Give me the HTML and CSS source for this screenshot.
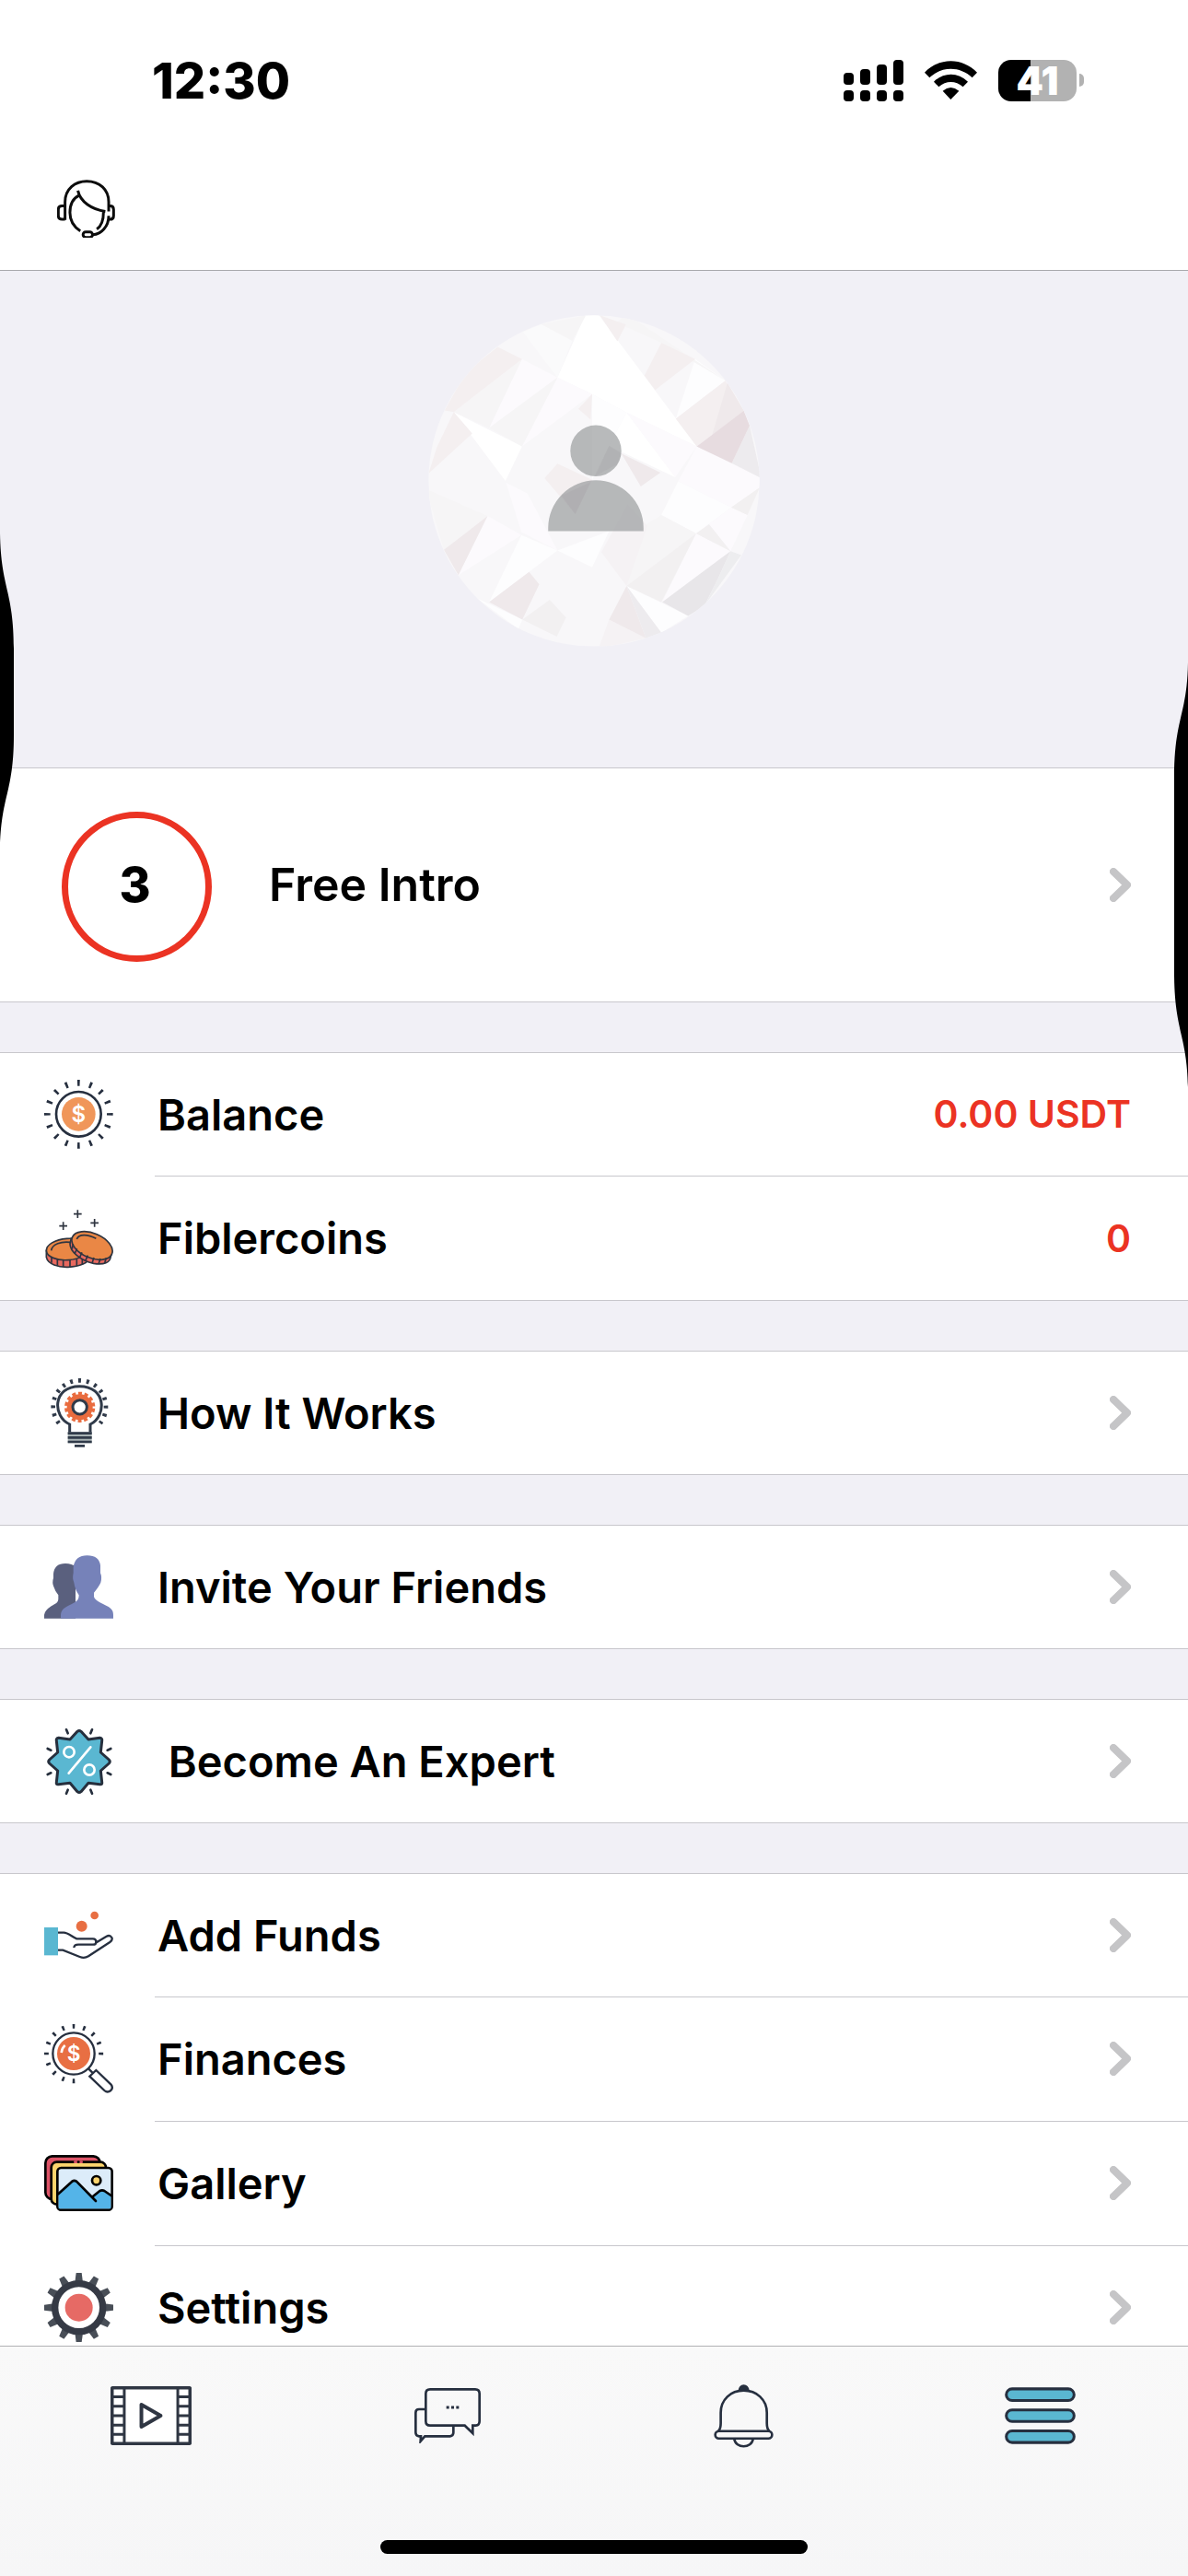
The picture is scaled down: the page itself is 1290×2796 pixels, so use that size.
FILE: index.html
```html
<!DOCTYPE html>
<html lang="en">
<head>
<meta charset="utf-8">
<meta name="viewport" content="width=device-width, initial-scale=1">
<title>Menu</title>
<link rel="stylesheet" href="styles.css">
</head>
<body>
<svg class="defs" aria-hidden="true">
  <symbol id="chevron" viewBox="0 0 23 37"><path d="M4 4 19 18.500 4 33" fill="none" stroke="#c5c5c7" stroke-width="8" stroke-linecap="round" stroke-linejoin="round"/></symbol>
</svg>
<div class="app">
  <header class="header">
    <div class="status">
      <time class="clock">12:30</time>
      <div class="indicators">
        <svg width="65" height="45" viewBox="0 0 65 45" aria-label="Signal">
          <rect x="0" y="14" width="11" height="13" rx="4"/><rect x="18" y="10" width="11" height="17" rx="4"/><rect x="36" y="5" width="11" height="22" rx="4"/><rect x="54" y="0" width="11" height="27" rx="4"/>
          <rect x="0" y="33" width="11" height="12" rx="4"/><rect x="18" y="33" width="11" height="12" rx="4"/><rect x="36" y="33" width="11" height="12" rx="4"/><rect x="54" y="33" width="11" height="12" rx="4"/>
        </svg>
        <svg class="wifi" width="57" height="45" viewBox="312 72 171 135" aria-label="Wi-Fi">
          <path d="M312 113C360 63 435 63 483 113L467 130C427 92 368 92 328 130Z"/>
          <path d="M342 143C374 111 421 111 453 143L437 160C413 139 382 139 358 160Z"/>
          <path d="M371 173Q397 151 424 173L397 201Z"/>
        </svg>
        <div class="battery"><span class="battery-level">41</span></div>
      </div>
    </div>
    <nav class="topbar">
      <button class="support" type="button" aria-label="Support">
        <svg width="63" height="63" viewBox="36 42 190 190" fill="none" stroke="#0c0c0c" stroke-width="9">
          <path d="M62 174V115C62 72 95 47 133 47C175 47 205 75 205 115V146"/>
          <path d="M62 128H52Q40 128 40 140V160Q40 172 52 172H62M205 128H209Q221 128 221 140V160Q221 172 209 172H203"/>
          <path d="M205 160C205 195 180 222 152 222"/><rect x="121" y="213" width="31" height="18" rx="9"/>
          <path d="M112 210C88 195 78 175 78 150C78 122 90 102 109 93M104 78C112 115 150 140 194 146M188 146C188 175 180 195 166 204"/>
        </svg>
      </button>
    </nav>
  </header>

  <main class="content">
    <div class="profile">
      <svg class="avatar" width="360" height="360" viewBox="77 66 1078 1076" role="img" aria-label="Profile picture">
        <clipPath id="round"><circle cx="616" cy="604" r="538"/></clipPath>
        <g clip-path="url(#round)">
          <rect x="77" y="66" width="1078" height="1076" fill="#f8f7f9"/>
          <g fill="#fff">
            <path d="M590 60H628L950 492 722 382 610 322 497 268ZM722 382 880 592 665 490ZM160 380 382 492 328 604Z"/>
          </g>
          <g fill="#fdfdfe">
            <path d="M945 208 1043 278 882 402ZM890 605 1062 690 948 775 835 715ZM722 945 922 1043 835 1097ZM235 985 383 1055 370 1085ZM497 830 665 767 610 885ZM380 780 497 830 275 998ZM610 322 722 382 665 490 610 600Z"/>
          </g>
          <g fill="#fcfafd">
            <path d="M382 208 497 268 275 432ZM497 268 610 322 382 492ZM950 492 1160 595V622L1062 690 890 605ZM722 382 950 492 880 592ZM948 775 1060 832 838 998ZM1062 690 1115 715 1060 832 990 745ZM270 718 380 780 175 910ZM330 610 400 645 497 830 380 770Z"/>
          </g>
          <path fill="#fafafb" d="M385 120 445 95 545 148 497 268Z"/>
          <g fill="#f6f5f6">
            <path d="M382 208 275 432 160 380ZM382 492 497 268 275 432ZM445 95 590 66 545 148ZM270 718 128 828 70 630ZM835 715 948 775 722 945 640 835ZM720 60 1043 278 835 155 690 90Z"/>
          </g>
          <path fill="#f5f2f4" d="M640 835 725 680 790 750 722 945ZM665 1055 785 1115 630 1150Z"/>
          <g fill="#f4eff0">
            <path d="M635 66 720 96 692 150ZM835 155 945 208 815 308 780 262ZM303 168 382 208 160 380 130 375 200 250ZM160 380 220 450 78 580 105 495ZM1043 278 1103 376 950 492 882 402ZM610 322 605 405 565 370ZM497 548 610 600 555 712 455 595Z"/>
          </g>
          <path fill="#efe9eb" d="M1050 285 1103 376 1000 455ZM705 515 832 577 768 622ZM270 718 175 910 128 828ZM275 998 405 900 438 940 383 1055ZM722 945 665 1055 785 1115Z"/>
          <path fill="#f2f0f1" d="M383 1055 472 990 525 1048 495 1110ZM722 945 948 775 835 998ZM1062 690 1155 625 1115 715ZM948 775 990 745 1060 832Z"/>
          <path fill="#edebee" d="M722 945 835 1097 785 1115ZM1122 424 1160 595 1064 546Z"/>
          <path fill="#e7dce0" d="M1103 376 1122 424 1064 546 950 492Z"/>
          <path fill="#e8e6e9" d="M838 998 1060 832 1020 920 975 1010 922 1043Z"/>
          <path fill="#ededef" d="M1060 832 1095 845 975 1010 1020 920Z"/>
          <path fill="#9a9c9e" fill-opacity=".7" d="M539 506a83 83 0 1 1 166 0a83 83 0 1 1-166 0ZM467 767V757A155 155 0 0 1 777 757V767Z"/>
          <path fill="#a19ca2" fill-opacity=".2" d="M510 652 605 608 555 712ZM665 490 705 515 690 550 620 588Z"/>
        </g>
      </svg>
    </div>

    <section class="group">
      <a class="row intro" href="#intro">
        <span class="count">3</span>
        <span class="label">Free Intro</span>
        <svg class="chevron"><use href="#chevron"/></svg>
      </a>
    </section>

    <section class="group">
      <div class="row">
        <svg class="icon" viewBox="0 0 225 225">
          <circle cx="112" cy="112" r="102" fill="none" stroke="#262f3f" stroke-width="20" pathLength="160" stroke-dasharray="2 8" stroke-dashoffset="1"/>
          <circle cx="112" cy="112" r="73" fill="none" stroke="#262f3f" stroke-width="8"/><circle cx="112" cy="112" r="55" fill="#f0965a"/>
          <text class="coin-sign" x="112" y="138" font-size="72">$</text>
        </svg>
        <span class="label">Balance</span><span class="value">0.00 USDT</span>
      </div>
      <div class="row">
        <svg class="icon" viewBox="144 558 225 225" stroke="#2f3540" stroke-width="5">
          <path d="M253 580V606M240 593H266M206 619V645M193 632H219M308 609V635M295 622H321" fill="none"/>
          <path d="M151 712V734C156 757 190 767 222 766C260 764 290 752 290 735V705Z" fill="#e8695f"/>
          <ellipse cx="220" cy="708" rx="69" ry="35" transform="rotate(-4 220 708)" fill="#ea8745"/>
          <path d="M167 712C170 690 200 682 228 685" fill="none"/>
          <path d="M168 732V752M187 740V761M206 744V765M228 744V765M250 740V762M268 735V758" fill="none"/>
          <path d="M232 672L228 690C228 715 262 745 305 754C340 760 358 750 360 735L365 715Z" fill="#e8695f"/>
          <ellipse cx="300" cy="696" rx="70" ry="40" transform="rotate(23 300 696)" fill="#ea8745"/>
          <path d="M250 675C257 656 288 660 313 673" fill="none"/>
          <path d="M238 690 235 707M251 706 243 723M267 718 259 736M286 728 278 746M306 735 300 753M327 738 321 756M346 736 341 753" fill="none"/>
        </svg>
        <span class="label">Fiblercoins</span><span class="value">0</span>
      </div>
    </section>

    <section class="group">
      <a class="row" href="#how">
        <svg class="icon" viewBox="144 108 225 225">
          <path d="M191.700 254.500A86 86 0 1 1 326.300 254.500" fill="none" stroke="#303a49" stroke-width="14" pathLength="258" stroke-dasharray="6 12"/>
          <path d="M227 290V258C170 232 171 134 259 134C347 134 348 232 294 258V290" fill="none" stroke="#303a49" stroke-width="9"/>
          <circle cx="260" cy="202" r="42" fill="#e96c3f"/><circle cx="260" cy="202" r="44" fill="none" stroke="#e96c3f" stroke-width="12" pathLength="140" stroke-dasharray="6 4" stroke-dashoffset="-2"/>
          <circle cx="260" cy="202" r="23" fill="#fff" stroke="#303a49" stroke-width="9"/>
          <path d="M221 301H299" stroke="#a7b2b3" stroke-width="36"/><path d="M221 287H299M221 301H299M221 315H299M243 328H276" stroke="#303a49" stroke-width="8"/>
        </svg>
        <span class="label">How It Works</span><svg class="chevron"><use href="#chevron"/></svg>
      </a>
    </section>

    <section class="group">
      <a class="row" href="#invite">
        <svg class="icon" viewBox="144 675 225 225">
          <path fill="#5a607e" d="M144 890V878Q146 864 167 850C183 841 190 838 190 826V814Q180 803 175 787Q169 773 174 758V745Q177 711 213 711Q235 711 246 722V890Z"/>
          <path fill="#7682b9" d="M198 890V878C200 861 210 855 226 847C249 836 257 832 257 814Q244 795 241 773Q235 760 239 742V722Q245 685 284 685Q323 685 327 718V742Q333 756 328 773Q323 785 306 806V819C310 831 320 835 340 845C361 855 369 861 369 878V890Z"/>
        </svg>
        <span class="label">Invite Your Friends</span><svg class="chevron"><use href="#chevron"/></svg>
      </a>
    </section>

    <section class="group">
      <a class="row" href="#expert">
        <svg class="icon" viewBox="-114 -114 225 225" stroke="#262f3d" stroke-linejoin="round" stroke-linecap="round">
          <path d="M37-92 42-104M92-37 103-42M92 37 103 42M37 92 42 104M-37 92-42 104M-92 37-103 42M-92-37-103-42M-37-92-42-104" stroke-width="8"/>
          <path fill="#5ab7d1" stroke-width="9" d="M-6-98Q0-103 6-98L30-72 67-77Q76-76 74-67L70-30 97-6Q103 0 97 6L70 30 74 67Q76 76 67 74L30 70 6 98Q0 103-6 98L-30 70-67 74Q-76 76-74 67L-70 30-97 6Q-103 0-97-6L-70-30-74-67Q-76-76-67-77L-30-72Z"/>
          <g fill="none" stroke="#fff" stroke-width="8"><circle cx="-33" cy="-31" r="17"/><circle cx="33" cy="27" r="17"/><path d="M37-47-34 38"/></g>
        </svg>
        <span class="label">&nbsp;Become An Expert</span><svg class="chevron"><use href="#chevron"/></svg>
      </a>
    </section>

    <section class="group">
      <a class="row" href="#funds">
        <svg class="icon" viewBox="144 99 225 225">
          <path fill="#5ab7d1" d="M144 186H189V277H144Z"/><circle cx="266" cy="182" r="18" fill="#e86f43"/><circle cx="308" cy="147" r="13" fill="#e86f43"/>
          <path fill="none" stroke="#262f3f" stroke-width="7" d="M189 203H208C222 203 235 218 250 223H303Q313 223 313 233Q313 242 303 242H255Q242 242 241 252M312 236 347 215Q358 209 364 219Q368 227 358 234L288 280Q275 288 260 282L205 260H189"/>
        </svg>
        <span class="label">Add Funds</span><svg class="chevron"><use href="#chevron"/></svg>
      </a>
      <a class="row" href="#finances">
        <svg class="icon" viewBox="144 504 225 225" fill="none" stroke="#262f3f" stroke-width="7">
          <path d="M243.900 688.900A89 89 0 1 1 328.900 603.900" stroke-width="15" pathLength="275" stroke-dasharray="5 17.500"/>
          <circle cx="240" cy="600" r="68"/><circle cx="240" cy="600" r="54" fill="#e86f43" stroke="none"/>
          <path d="M289 650 301 662M313 654 361 700Q370 711 361 720Q350 729 340 720L292 674Z"/>
          <path d="M200 597Q202 581 212 573" stroke="#fff" stroke-width="8"/><text class="coin-sign" x="240" y="624" font-size="68">$</text>
        </svg>
        <span class="label">Finances</span><svg class="chevron"><use href="#chevron"/></svg>
      </a>
      <a class="row" href="#gallery">
        <svg class="icon" viewBox="144 909 225 225" stroke="#000" stroke-width="8" stroke-linecap="round" stroke-linejoin="round">
          <rect x="148" y="934" width="178" height="140" rx="22" fill="#dd5468"/><rect x="167" y="953" width="178" height="138" rx="18" fill="#fbd46d"/>
          <path d="M244 953H266" stroke="#dd5468"/><path d="M255 953H256"/>
          <rect x="187" y="972" width="178" height="137" rx="12" fill="#dcecf9"/>
          <path fill="#54b4e8" stroke="none" d="M191 1056 235 1016Q242 1010 249 1016L300 1066 325 1047Q333 1043 340 1047L361 1060V1105H191Z"/>
          <path fill="none" d="M190 1057 235 1016Q242 1011 249 1016L312 1080M300 1067 325 1047Q333 1043 340 1047L362 1062"/>
          <circle cx="314" cy="1013" r="14" fill="#fbd46d"/>
        </svg>
        <span class="label">Gallery</span><svg class="chevron"><use href="#chevron"/></svg>
      </a>
      <a class="row" href="#settings">
        <svg class="icon" viewBox="-113 -113 225 225">
          <defs><path id="tooth" d="M-13-82-9-113H9L13-82Z"/></defs>
          <g fill="#484e57"><use href="#tooth"/><use href="#tooth" transform="rotate(30)"/><use href="#tooth" transform="rotate(60)"/><use href="#tooth" transform="rotate(90)"/><use href="#tooth" transform="rotate(120)"/><use href="#tooth" transform="rotate(150)"/><use href="#tooth" transform="rotate(180)"/><use href="#tooth" transform="rotate(210)"/><use href="#tooth" transform="rotate(240)"/><use href="#tooth" transform="rotate(270)"/><use href="#tooth" transform="rotate(300)"/><use href="#tooth" transform="rotate(330)"/></g>
          <circle r="78" fill="#fff" stroke="#353a45" stroke-width="22"/><circle r="45" fill="#e66a65"/>
        </svg>
        <span class="label">Settings</span><svg class="chevron"><use href="#chevron"/></svg>
      </a>
    </section>
  </main>

  <footer class="tabbar">
    <nav class="tabs">
      <a class="tab" href="#videos" aria-label="Videos">
        <svg width="88" height="64" viewBox="55 60 265 192" stroke="#2f3643" fill="none">
          <rect x="60" y="65" width="255" height="182" rx="3" fill="#fff" stroke-width="11"/>
          <path d="M100 65V247M275 65V247" stroke-width="9"/><path d="M60 94H100M60 125H100M60 156H100M60 187H100M60 217H100M275 94H315M275 125H315M275 156H315M275 187H315M275 217H315" stroke-width="9"/>
          <path d="M156 120V192L219 156Z" stroke-width="12" stroke-linejoin="round"/>
        </svg>
      </a>
      <a class="tab" href="#chats" aria-label="Chats">
        <svg width="72" height="60" viewBox="1050 65 216 180" stroke="#262f3f" stroke-width="8" fill="none">
          <path d="M1087 134H1065Q1054 134 1054 145V210Q1054 221 1065 222H1071L1070 238 1084 222H1166Q1177 221 1177 210V188"/>
          <path d="M1101 69H1248Q1262 69 1262 83V173Q1262 186 1250 187H1240V212L1214 187H1101Q1087 187 1087 173V83Q1087 69 1101 69Z"/>
          <path d="M1154 128H1196" stroke-width="9" stroke-dasharray="9 7"/>
        </svg>
      </a>
      <a class="tab" href="#alerts" aria-label="Notifications">
        <svg width="65" height="69" viewBox="74 53 194 208" stroke="#262f3f" stroke-width="8" fill="none">
          <path d="M153 74Q156 54 171 54Q187 54 190 74Z" fill="#262f3f" stroke="none"/>
          <path d="M88 206Q96 198 96 180V146C96 103 129 73 171 73C213 73 247 103 247 146V180Q247 198 255 206"/>
          <rect x="78" y="206" width="186" height="24" rx="12"/><path d="M140 231C145 264 197 264 202 231"/>
        </svg>
      </a>
      <a class="tab" href="#menu" aria-label="Menu" aria-current="page">
        <svg width="77" height="62" viewBox="1022 64 230 184" fill="#5ab7d1" stroke="#262f3f" stroke-width="9">
          <rect x="1027" y="69" width="220" height="38" rx="19"/><rect x="1027" y="137" width="220" height="38" rx="19"/><rect x="1027" y="205" width="220" height="38" rx="19"/>
        </svg>
      </a>
    </nav>
    <div class="home-indicator"></div>
  </footer>

  <svg class="edge edge-left" width="15" height="344" viewBox="0 0 15 344"><path d="M0 0C1 60 15 62 15 125V219C15 282 1 284 0 344Z"/></svg>
  <svg class="edge edge-right" width="15" height="461" viewBox="0 0 15 461"><path d="M15 0C14 58 0 60 0 125V336C0 401 14 403 15 461Z"/></svg>
</div>
</body>
</html>
```
FILE: styles.css
```css
* { box-sizing: border-box; }

body {
  margin: 0;
  background: #f1f0f6;
  color: #000;
  font-family: Inter, "Liberation Sans", sans-serif;
}

a { color: inherit; text-decoration: none; }
svg { display: block; flex: none; }

.defs { position: absolute; width: 0; height: 0; }

.app {
  position: relative;
  display: flex;
  flex-direction: column;
  height: 100vh;
  overflow: hidden;
}

/* Header */
.header {
  flex: none;
  background: #fff;
  border-bottom: 1px solid #a9a9ad;
}

.status {
  display: flex;
  align-items: center;
  justify-content: space-between;
  height: 159px;
  padding: 15px 121px 0 165px;
}

.clock { font-size: 54px; font-weight: 800; }

.indicators { display: flex; align-items: center; gap: 23px; }

.battery {
  position: relative;
  display: flex;
  align-items: center;
  justify-content: center;
  width: 85px;
  height: 45px;
  border-radius: 14px;
  background: linear-gradient(90deg, #000 41%, #b2b2b2 41%);
}

.battery::after {
  content: "";
  position: absolute;
  left: 88px;
  top: 15px;
  width: 5px;
  height: 14px;
  border-radius: 0 5px 5px 0;
  background: #b2b2b2;
}

.battery-level { color: #fff; font-size: 42px; line-height: 45px; font-weight: 900; }

.topbar { display: flex; align-items: center; height: 134px; padding: 0 62px; }

.support { padding: 0; border: 0; background: none; }

/* Content */
.content { flex: 1; min-height: 0; overflow-y: auto; scrollbar-width: none; }

.profile { display: flex; justify-content: center; padding: 48px 0 131px; }

.group { margin-bottom: 54px; background: #fff; }

.row {
  position: relative;
  display: flex;
  align-items: center;
  height: 135px;
  padding: 0 62px 2px 48px;
  font-size: 47px;
  font-weight: 600;
}

.row::after {
  content: "";
  position: absolute;
  left: 168px;
  right: 0;
  bottom: 0;
  height: 1px;
  background: #c8c7cc;
}

.row:last-child::after { left: 0; }
.row:first-child { border-top: 1px solid #c8c7cc; }

.icon { width: 75px; height: 75px; margin-right: 48px; }

.label { flex: 1; white-space: nowrap; }

.value { color: #eb3323; font-size: 41px; font-weight: 600; }

.chevron { width: 23px; height: 37px; }

.intro { height: 255px; padding-left: 67px; font-size: 50px; }

.count {
  display: flex;
  align-items: center;
  justify-content: center;
  width: 163px;
  height: 163px;
  margin: 4px 62px 0 0;
  padding: 0 4px 4px 0;
  border: 7px solid #eb3323;
  border-radius: 50%;
  font-size: 52px;
  font-weight: 800;
}

.coin-sign {
  fill: #fff;
  stroke: none;
  font-family: Inter, sans-serif;
  font-weight: 600;
  text-anchor: middle;
}

/* Tab bar */
.tabbar {
  flex: none;
  padding-bottom: 24px;
  border-top: 1px solid #b2b2b4;
  background: linear-gradient(#f9f9f9, #f6f6f7);
}

.tabs { display: flex; height: 150px; padding-left: 3px; }

.tab { flex: 1; display: flex; align-items: center; justify-content: center; }

.home-indicator {
  width: 36%;
  height: 15px;
  margin: 60px auto 0;
  border-radius: 8px;
  background: #000;
}

/* Black shapes over the screen edges */
.edge { position: absolute; }
.edge-left { left: 0; top: 579px; }
.edge-right { right: 0; top: 719px; }
```
